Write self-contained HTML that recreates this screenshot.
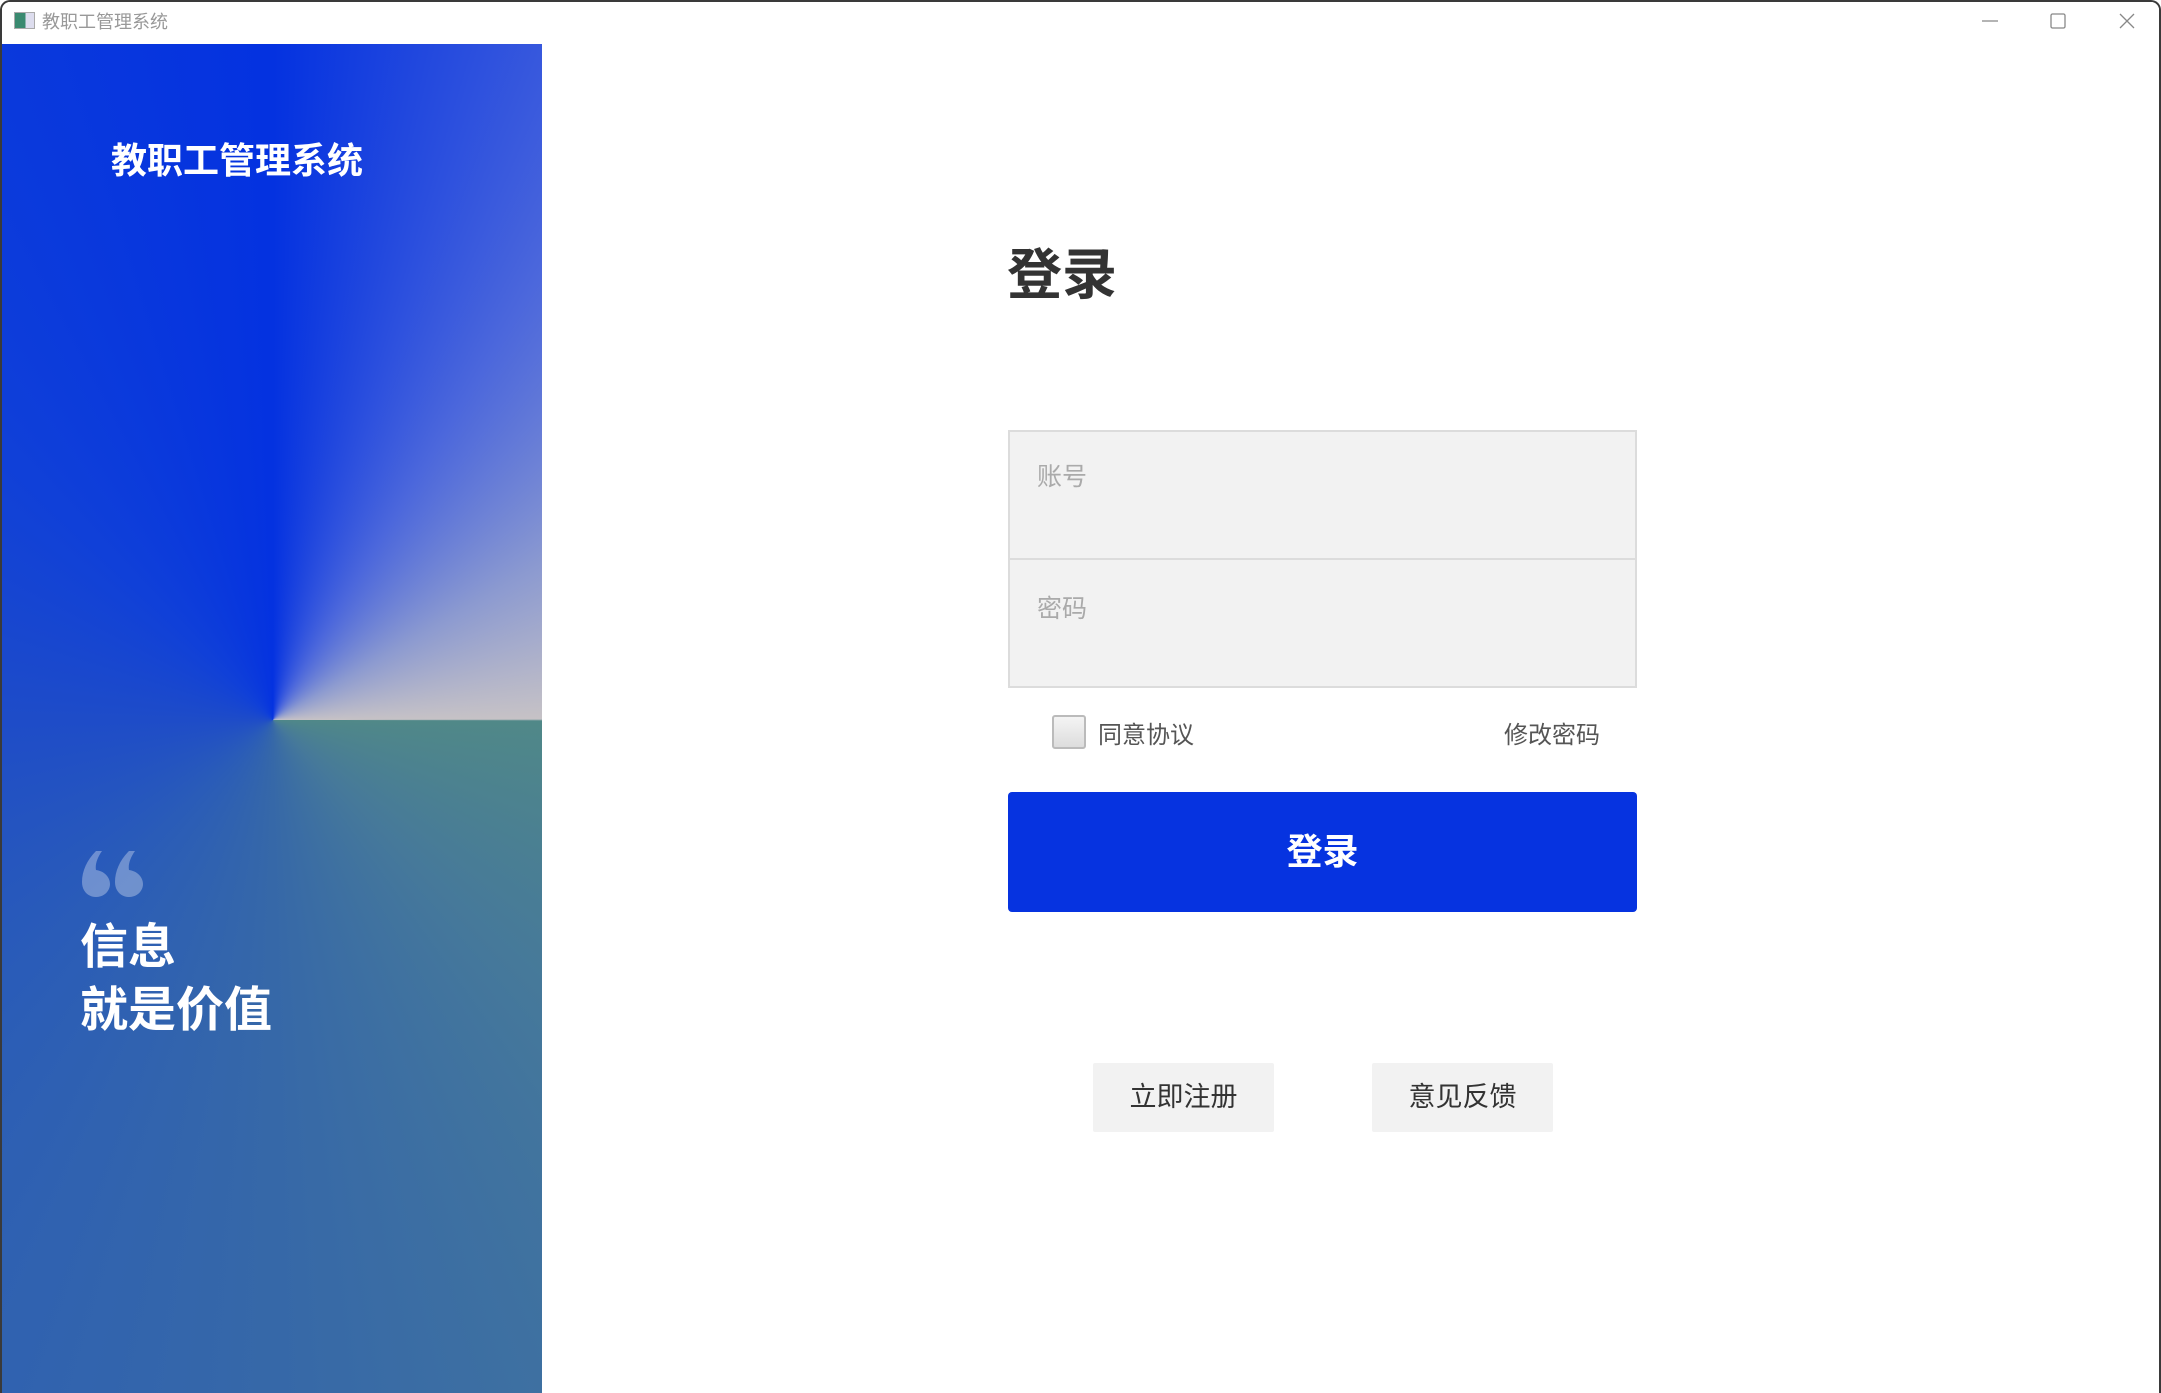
<!DOCTYPE html>
<html><head><meta charset="utf-8"><style>
*{margin:0;padding:0;box-sizing:border-box}
html,body{width:2161px;height:1393px;overflow:hidden;background:#fff;font-family:"Liberation Sans","Noto Sans CJK SC",sans-serif}
.frame{position:absolute;left:0;top:0;width:2161px;height:1393px;border:2px solid #3a3a3a;border-bottom:none;border-radius:10px 10px 0 0;background:#fff;overflow:hidden}
.titlebar{position:absolute;left:0;top:0;width:100%;height:42px;background:#fff}
.ticon{position:absolute;left:12px;top:10px;width:21px;height:17px;border:1px solid #aaa;background:linear-gradient(90deg,#3a8a70 0 55%,#dde 55%)}
.ttext{position:absolute;left:40px;top:6px;font-size:18px;color:#999}
.panel{position:absolute;left:0;top:42px;width:540px;height:1351px;
background:conic-gradient(from 0deg at 271px 676px,#0432e0 0deg,#4a66dc 30deg,#8c9ad0 60deg,#c6c2c6 89.8deg,#508888 90.2deg,#46799a 135deg,#3668a8 180deg,#2a5cb8 225deg,#1e4cc8 270deg,#1040d8 315deg,#0432e0 360deg)}
.ptitle{position:absolute;left:109px;top:88px;font-size:36px;font-weight:bold;color:#fff}
.quote{position:absolute;left:80px;top:807px}
.slogan{position:absolute;left:78px;top:872px;font-size:48px;font-weight:bold;color:#fff;line-height:63px}
.h1{position:absolute;left:1005px;top:228px;font-size:55px;font-weight:bold;color:#333}
.inp{position:absolute;left:1006px;width:629px;background:#f2f2f2;border:2px solid #dcdcdc;font-size:25px;color:#aaa;padding:25px 0 0 27px}
.cb{position:absolute;left:1050px;width:34px;height:34px;border:2px solid #bbb;border-radius:3px;background:linear-gradient(#f4f4f4,#ddd)}
.lbl{position:absolute;font-size:24px;color:#555}
.btn{position:absolute;left:1006px;top:790px;width:629px;height:120px;background:#0633e0;border-radius:4px;color:#fff;font-size:36px;font-weight:bold;text-align:center;line-height:120px}
.sb{position:absolute;top:1061px;width:181px;height:69px;background:#f2f2f2;border-radius:2px;font-size:27px;color:#333;text-align:center;line-height:69px}
</style></head><body>
<div class="frame">
<div class="titlebar">
<div class="ticon"></div><div class="ttext">教职工管理系统</div>
<svg style="position:absolute;left:1970px;top:6px" width="190" height="30" viewBox="0 0 190 30">
<line x1="10" y1="13" x2="26" y2="13" stroke="#888" stroke-width="1.3"/>
<rect x="79" y="6" width="14" height="14" rx="1.5" fill="none" stroke="#888" stroke-width="1.3"/>
<path d="M148 6 L162 20 M162 6 L148 20" stroke="#888" stroke-width="1.3"/>
</svg>
</div>
<div class="panel">
<div class="ptitle">教职工管理系统</div>
<svg class="quote" width="64" height="46" viewBox="0 0 64 46" fill="rgba(255,255,255,0.32)">
<path d="M14 0 L20 0 C15 7 13 14 14 19 C22 20 28 26 28 33 C28 40 22 46 14 46 C6 46 0 40 0 31 C0 20 5 9 14 0 Z"/>
<path d="M47 0 L53 0 C48 7 46 14 47 19 C55 20 61 26 61 33 C61 40 55 46 47 46 C39 46 33 40 33 31 C33 20 38 9 47 0 Z"/>
</svg>
<div class="slogan">信息<br>就是价值</div>
</div>
<div class="h1">登录</div>
<div class="inp" style="top:428px;height:130px">账号</div>
<div class="inp" style="top:556px;height:130px;padding-top:29px">密码</div>
<div class="cb" style="top:713px"></div>
<div class="lbl" style="left:1096px;top:713px">同意协议</div>
<div class="lbl" style="left:1502px;top:713px">修改密码</div>
<div class="btn">登录</div>
<div class="sb" style="left:1091px">立即注册</div>
<div class="sb" style="left:1370px">意见反馈</div>
</div>
</body></html>
